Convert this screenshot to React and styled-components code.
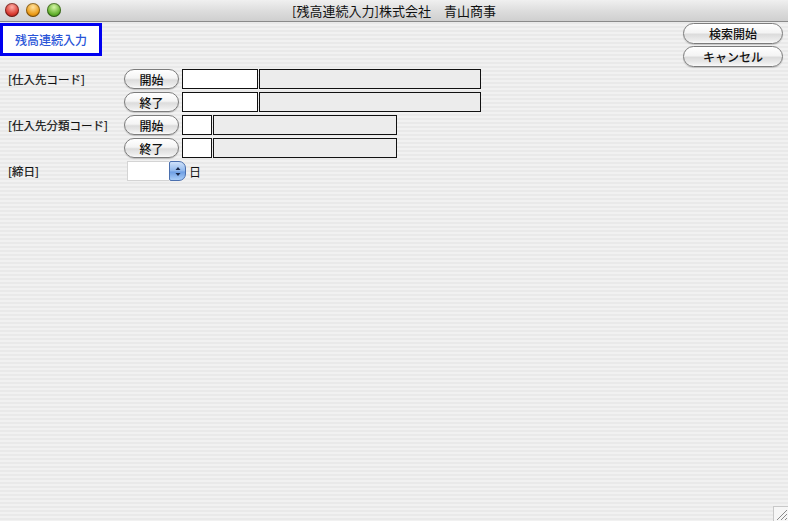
import React from "react";
import styled, { createGlobalStyle } from "styled-components";

const font = `"Noto Sans CJK JP", "Liberation Sans", sans-serif`;

const Global = createGlobalStyle`
  html, body { margin: 0; padding: 0; }
  body { font-family: ${font}; }
`;

// окно целиком
const Window = styled.div`
  width: 788px;
  height: 521px;
  display: flex;
  flex-direction: column;
  overflow: hidden;
  position: relative;
  background: repeating-linear-gradient(
    to bottom,
    #f1f1f1 0px,
    #f1f1f1 2px,
    #e9e9e9 2px,
    #e9e9e9 4px
  );
`;

const TitleBar = styled.div`
  height: 21px;
  flex: none;
  display: flex;
  align-items: center;
  justify-content: center;
  position: relative;
  background: linear-gradient(to bottom, #f0f0f0 0%, #dcdcdc 55%, #cfcfcf 100%);
  border-bottom: 1px solid #8a8a8a;
  font-size: 13px;
  color: #111;
`;

const Lights = styled.div`
  position: absolute;
  left: 5px;
  top: 3px;
  display: flex;
  gap: 7px;
`;

const Light = styled.span`
  width: 14px;
  height: 14px;
  border-radius: 50%;
  background: radial-gradient(circle at 50% 30%, ${({ hi }) => hi} 0%, ${({ c }) => c} 60%, ${({ lo }) => lo} 100%);
  box-shadow: inset 0 0 0 1px rgba(0, 0, 0, 0.4);
`;

const Body = styled.div`
  flex: 1;
  display: flex;
  justify-content: space-between;
  padding-top: 1px;
`;

const Left = styled.div`
  display: flex;
  flex-direction: column;
`;

const Heading = styled.div`
  width: 96px;
  height: 27px;
  border: 3px solid #0000f0;
  background: #fff;
  display: flex;
  align-items: center;
  justify-content: center;
  color: #2a55d8;
  font-size: 12px;
  font-weight: 500;
`;

const Form = styled.div`
  display: grid;
  grid-template-columns: 116px 58px auto;
  grid-auto-rows: 20px;
  row-gap: 3px;
  margin-top: 13px;
  margin-left: 8px;
  align-items: center;
`;

const Label = styled.div`
  font-size: 11.5px;
  color: #111;
  grid-column: 1;
  -webkit-text-stroke: 0.2px #111;
`;

const Pill = styled.button`
  font-family: ${font};
  font-size: 12px;
  font-weight: 500;
  color: #111;
  width: ${({ w }) => w}px;
  height: ${({ h }) => h || 20}px;
  padding: 0;
  border: 1px solid #7c7c7c;
  border-radius: 11px;
  background: linear-gradient(to bottom, #ffffff 0%, #f4f4f4 45%, #dcdcdc 55%, #ececec 85%, #fafafa 100%);
  box-shadow: 0 1px 1px rgba(0, 0, 0, 0.18);
  display: flex;
  align-items: center;
  justify-content: center;
`;

const Fields = styled.div`
  display: flex;
  gap: 1px;
  height: 20px;
`;

const Field = styled.div`
  width: ${({ w }) => w}px;
  height: 20px;
  box-sizing: border-box;
  border: 1px solid #111;
  background: ${({ gray }) => (gray ? "#ececec" : "#fff")};
`;

const Stepper = styled.div`
  display: flex;
  align-items: center;
  grid-column: 2 / 4;
  margin-left: 3px;
  gap: 3px;
  font-size: 12px;
  color: #111;
`;

const StepBox = styled.div`
  display: flex;
  height: 20px;
`;

const StepInput = styled.div`
  width: 42px;
  height: 20px;
  box-sizing: border-box;
  background: #fff;
  border: 1px solid #d4d4d4;
  border-right: none;
`;

const StepArrows = styled.div`
  width: 17px;
  height: 20px;
  box-sizing: border-box;
  border: 1px solid #4a6fae;
  border-radius: 2px 7px 7px 2px;
  background: linear-gradient(to bottom, #cfe2fb 0%, #8fb7ec 50%, #6d9ee3 55%, #a9cdf7 100%);
  display: flex;
  align-items: center;
  justify-content: center;
`;

const Right = styled.div`
  display: flex;
  flex-direction: column;
  gap: 2px;
  margin-right: 5px;
`;

const Grip = styled.svg`
  position: absolute;
  right: 0;
  bottom: 0;
`;

const TopRow = ({ label, btn, widths }) => (
  <>
    <Label>{label}</Label>
    <Pill w={55} style={{ gridColumn: 2 }}>
      {btn}
    </Pill>
    <Fields>
      <Field w={widths[0]} />
      <Field w={widths[1]} gray />
    </Fields>
  </>
);

const App = () => (
  <Window>
    <Global />
    <TitleBar>
      <Lights>
        <Light hi="#ffb0a8" c="#d8382f" lo="#7e140e" />
        <Light hi="#ffe3a0" c="#eb9a16" lo="#8e5204" />
        <Light hi="#d6f5a6" c="#62b02c" lo="#2a600c" />
      </Lights>
      [残高連続入力]株式会社　青山商事
    </TitleBar>
    <Body>
      <Left>
        <Heading>残高連続入力</Heading>
        <Form>
          <TopRow label="[仕入先コード]" btn="開始" widths={[76, 222]} />
          <TopRow label="" btn="終了" widths={[76, 222]} />
          <TopRow label="[仕入先分類コード]" btn="開始" widths={[30, 184]} />
          <TopRow label="" btn="終了" widths={[30, 184]} />
          <Label>[締日]</Label>
          <Stepper>
            <StepBox>
              <StepInput />
              <StepArrows>
                <svg width="6" height="11" viewBox="0 0 6 11">
                  <path d="M3 1 L5.5 4 H0.5 Z M3 10 L5.5 7 H0.5 Z" fill="#1a2a4a" />
                </svg>
              </StepArrows>
            </StepBox>
            日
          </Stepper>
        </Form>
      </Left>
      <Right>
        <Pill w={100} h={21}>検索開始</Pill>
        <Pill w={100} h={21}>キャンセル</Pill>
      </Right>
    </Body>
    <Grip width="15" height="15" viewBox="0 0 15 15">
      <rect x="0.5" y="0.5" width="15" height="15" fill="#f6f6f6" stroke="#c8c8c8" />
      <path d="M4 14 L14 4 M8 14 L14 8 M12 14 L14 12" stroke="#8a8a8a" strokeWidth="1" />
    </Grip>
  </Window>
);

export default App;
